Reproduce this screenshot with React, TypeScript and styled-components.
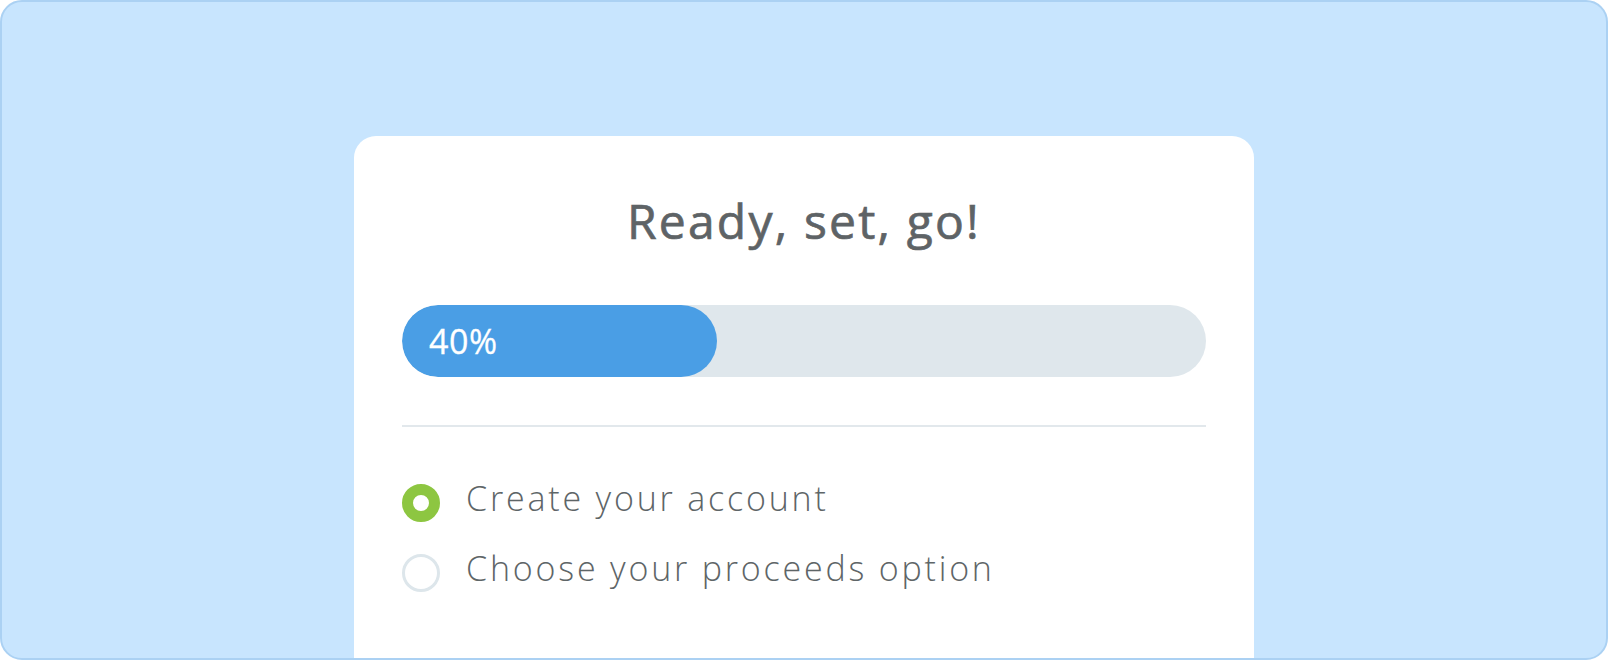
import styled, { createGlobalStyle } from "styled-components";

const GlobalStyle = createGlobalStyle`
  html, body {
    margin: 0;
    padding: 0;
    background: #ffffff;
  }
  * {
    box-sizing: border-box;
  }
`;

const steps = [
  { label: "Create your account", done: true },
  { label: "Choose your proceeds option", done: false },
];

export default function App() {
  const progress = 40;

  return (
    <>
      <GlobalStyle />
      <Frame>
        <Card>
          <Title>Ready, set, go!</Title>
          <Track>
            <Fill style={{ width: `calc(${progress}% - 7px)` }}>
              <FillLabel>{progress}%</FillLabel>
            </Fill>
          </Track>
          <Divider />
          <StepList>
            {steps.map((step) => (
              <Step key={step.label}>
                <Radio $done={step.done} />
                <StepLabel>{step.label}</StepLabel>
              </Step>
            ))}
          </StepList>
        </Card>
      </Frame>
    </>
  );
}

const Frame = styled.div`
  height: 660px;
  display: flex;
  flex-direction: column;
  align-items: center;
  padding-top: 134px;
  overflow: hidden;

  background-color: #c8e5fe;
  border: 2px solid #abd1f3;
  border-radius: 22px;
  font-family: "Open Sans", Lato, sans-serif;
`;

const Card = styled.div`
  width: 900px;
  flex: 1;
  padding: 56px 48px 0;
  background-color: #ffffff;
  border-radius: 22px 22px 0 0;
`;

const Title = styled.h1`
  margin: 0;
  text-align: center;
  font-size: 48px;
  line-height: 58px;
  font-weight: 400;
  letter-spacing: 2.2px;
  color: #5e6366;
  -webkit-text-stroke: 0.7px #5e6366;
`;

const Track = styled.div`
  margin-top: 55px;
  height: 72px;
  border-radius: 36px;
  background-color: #dfe7ec;
  overflow: hidden;
`;

const Fill = styled.div`
  height: 100%;
  display: flex;
  align-items: center;
  padding-left: 27px;
  border-radius: 36px;
  background-color: #4a9ee5;
`;

const FillLabel = styled.span`
  color: #ffffff;
  font-size: 34px;
  font-weight: 400;
  letter-spacing: 0.5px;
  -webkit-text-stroke: 0.3px #ffffff;
`;

const Divider = styled.div`
  margin-top: 48px;
  height: 2px;
  background-color: #e2e8ec;
`;

const StepList = styled.div`
  margin-top: 57px;
  display: flex;
  flex-direction: column;
  gap: 32px;
`;

const Step = styled.div`
  height: 38px;
  display: flex;
  align-items: flex-start;
  gap: 26px;
`;

const Radio = styled.span<{ $done: boolean }>`
  flex: none;
  width: 38px;
  height: 38px;
  border-radius: 50%;
  background-color: #ffffff;
  border: ${(p) => (p.$done ? "11px solid #8dc641" : "3px solid #dde6eb")};
`;

const StepLabel = styled.span`
  line-height: 28px;
  font-size: 34px;
  font-weight: 300;
  letter-spacing: 2.8px;
  color: #5e6567;
`;
